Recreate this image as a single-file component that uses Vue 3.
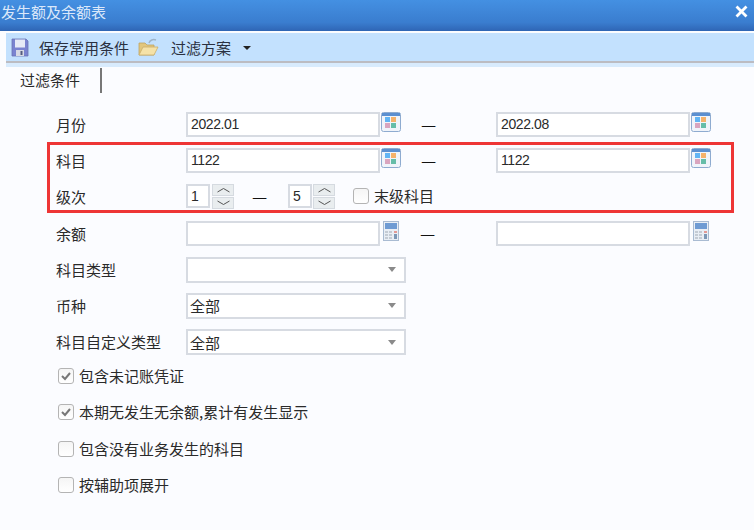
<script setup>
const calendarCells = [
  { x: 4, y: 5, c: '#62b4f4' }, { x: 10, y: 5, c: '#f5b26b' },
  { x: 4, y: 11, c: '#d9a5bf' }, { x: 10, y: 11, c: '#66bda8' }
]
const options = [
  { text: '包含未记账凭证', checked: true },
  { text: '本期无发生无余额,累计有发生显示', checked: true },
  { text: '包含没有业务发生的科目', checked: false },
  { text: '按辅助项展开', checked: false }
]
</script>

<template>
  <div class="win">
    <header class="title">
      <span>发生额及余额表</span>
      <svg class="close" width="13" height="13" viewBox="0 0 13 13">
        <path d="M2.5 2.5l8 8M10.5 2.5l-8 8" stroke="#fff" stroke-width="2.8" stroke-linecap="square" fill="none" />
      </svg>
    </header>

    <div class="toolbar">
      <svg class="floppy" width="18" height="19" viewBox="0 0 18 19">
        <path d="M1 1h14l2 2v15H1z" fill="#7a83d0" stroke="#6a73b4" stroke-width=".8" />
        <rect x="4" y="1.5" width="10" height="8" fill="#e6eaf6" />
        <rect x="5" y="12" width="8" height="6" fill="#d6d9e4" />
        <rect x="9.5" y="13" width="2" height="4" fill="#555c80" />
      </svg>
      <span class="tool-text save">保存常用条件</span>
      <svg class="folder" width="21" height="19" viewBox="0 0 21 19">
        <path d="M1 5h6l2 2h7v10H1z" fill="#e2c67c" stroke="#bfa362" stroke-width=".8" />
        <path d="M5 9h15l-4 8H1z" fill="#f5e2a8" stroke="#c9ad6a" stroke-width=".8" />
        <path d="M11 5c1-3 4-4 7-3" stroke="#9fb4c8" stroke-width="1.5" fill="none" />
      </svg>
      <span class="tool-text scheme">过滤方案</span>
      <i class="caret"></i>
    </div>
    <div class="toolbar-edge"></div>

    <main class="body">
      <div class="tabs">
        <span class="tab">过滤条件</span>
      </div>

      <div class="form">
        <div class="row">
          <label class="lbl">月份</label>
          <div class="input">2022.01</div>
          <svg class="pick" width="20" height="20" viewBox="0 0 20 20">
            <rect x=".5" y=".5" width="19" height="19" rx="2" fill="#f0f4fa" stroke="#8eabd0" />
            <rect x="1" y="1" width="18" height="3" fill="#5b8fd0" />
            <rect v-for="c in calendarCells" :key="c.x + '-' + c.y" :x="c.x" :y="c.y" width="5" height="5" :fill="c.c" />
          </svg>
          <span class="dash">—</span>
          <div class="input">2022.08</div>
          <svg class="pick" width="20" height="20" viewBox="0 0 20 20">
            <rect x=".5" y=".5" width="19" height="19" rx="2" fill="#f0f4fa" stroke="#8eabd0" />
            <rect x="1" y="1" width="18" height="3" fill="#5b8fd0" />
            <rect v-for="c in calendarCells" :key="c.x + '-' + c.y" :x="c.x" :y="c.y" width="5" height="5" :fill="c.c" />
          </svg>
        </div>

        <div class="row">
          <label class="lbl">科目</label>
          <div class="input">1122</div>
          <svg class="pick" width="20" height="20" viewBox="0 0 20 20">
            <rect x=".5" y=".5" width="19" height="19" rx="2" fill="#f0f4fa" stroke="#8eabd0" />
            <rect x="1" y="1" width="18" height="3" fill="#5b8fd0" />
            <rect v-for="c in calendarCells" :key="c.x + '-' + c.y" :x="c.x" :y="c.y" width="5" height="5" :fill="c.c" />
          </svg>
          <span class="dash">—</span>
          <div class="input">1122</div>
          <svg class="pick" width="20" height="20" viewBox="0 0 20 20">
            <rect x=".5" y=".5" width="19" height="19" rx="2" fill="#f0f4fa" stroke="#8eabd0" />
            <rect x="1" y="1" width="18" height="3" fill="#5b8fd0" />
            <rect v-for="c in calendarCells" :key="c.x + '-' + c.y" :x="c.x" :y="c.y" width="5" height="5" :fill="c.c" />
          </svg>
        </div>

        <div class="row">
          <label class="lbl">级次</label>
          <div class="spin-input">1</div>
          <div class="spin-btns first">
            <span class="spin"><svg width="13" height="6" viewBox="0 0 13 6"><path d="M.5 5l6-3.5 6 3.5" stroke="#555" fill="none" /></svg></span>
            <span class="spin"><svg width="13" height="6" viewBox="0 0 13 6"><path d="M.5 1l6 3.5 6-3.5" stroke="#555" fill="none" /></svg></span>
          </div>
          <span class="dash small">—</span>
          <div class="spin-input">5</div>
          <div class="spin-btns">
            <span class="spin"><svg width="13" height="6" viewBox="0 0 13 6"><path d="M.5 5l6-3.5 6 3.5" stroke="#555" fill="none" /></svg></span>
            <span class="spin"><svg width="13" height="6" viewBox="0 0 13 6"><path d="M.5 1l6 3.5 6-3.5" stroke="#555" fill="none" /></svg></span>
          </div>
          <span class="box leaf"></span>
          <span class="leaf-text">末级科目</span>
        </div>

        <div class="row">
          <label class="lbl">余额</label>
          <div class="input"></div>
          <svg class="calc" width="16" height="20" viewBox="0 0 16 20">
            <rect x=".5" y=".5" width="15" height="19" fill="#e9eef5" stroke="#a9bbd2" />
            <rect x="2" y="2" width="12" height="6" fill="#6f9bd3" />
            <g fill="#c4cbd4">
              <rect x="2" y="10" width="3" height="2" /><rect x="6" y="10" width="3" height="2" />
              <rect x="2" y="13" width="3" height="2" /><rect x="6" y="13" width="3" height="2" />
              <rect x="2" y="16" width="3" height="2" /><rect x="6" y="16" width="3" height="2" />
            </g>
            <rect x="11" y="10" width="3" height="2" fill="#e39a95" />
            <rect x="11" y="13" width="3" height="5" fill="#7d97b5" />
          </svg>
          <span class="dash narrow">—</span>
          <div class="input"></div>
          <svg class="calc" width="16" height="20" viewBox="0 0 16 20">
            <rect x=".5" y=".5" width="15" height="19" fill="#e9eef5" stroke="#a9bbd2" />
            <rect x="2" y="2" width="12" height="6" fill="#6f9bd3" />
            <g fill="#c4cbd4">
              <rect x="2" y="10" width="3" height="2" /><rect x="6" y="10" width="3" height="2" />
              <rect x="2" y="13" width="3" height="2" /><rect x="6" y="13" width="3" height="2" />
              <rect x="2" y="16" width="3" height="2" /><rect x="6" y="16" width="3" height="2" />
            </g>
            <rect x="11" y="10" width="3" height="2" fill="#e39a95" />
            <rect x="11" y="13" width="3" height="5" fill="#7d97b5" />
          </svg>
        </div>

        <div class="row">
          <label class="lbl">科目类型</label>
          <div class="combo"><span></span><i class="arrow"></i></div>
        </div>
        <div class="row">
          <label class="lbl">币种</label>
          <div class="combo"><span>全部</span><i class="arrow"></i></div>
        </div>
        <div class="row">
          <label class="lbl">科目自定义类型</label>
          <div class="combo"><span>全部</span><i class="arrow"></i></div>
        </div>
      </div>

      <div class="checks">
        <div v-for="o in options" :key="o.text" class="check">
          <span class="box">
            <svg v-if="o.checked" width="14" height="14" viewBox="0 0 14 14">
              <path d="M3 7l3 3 5-6" stroke="#777" stroke-width="2" fill="none" />
            </svg>
          </span>
          <span class="check-text">{{ o.text }}</span>
        </div>
      </div>

      <div class="highlight"></div>
    </main>
  </div>
</template>

<style scoped>
.win {
  width: 754px;
  height: 530px;
  overflow: hidden;
  position: relative;
  background: #fbfcff;
  font-family: "Noto Sans CJK SC", "Liberation Sans", sans-serif;
  font-size: 15px;
  color: #2a2a2a;
}
.title {
  height: 31px;
  box-sizing: border-box;
  padding: 0 6px 7px 1px;
  display: flex;
  align-items: center;
  justify-content: space-between;
  color: #dbe8fa;
  background: linear-gradient(#4490e2, #3a7dcf 75%, #3068b8);
  border-bottom: 1px solid #2f66b4;
}
.close { display: block; }
.toolbar {
  height: 28px;
  margin: 2px 0 0 6px;
  display: flex;
  align-items: center;
  background: #c3e1fe;
  border-bottom: 2px solid #bcbcc2;
}
.floppy { margin-left: 5px; }
.tool-text { color: #2a3040; line-height: 1; }
.save { margin-left: 10px; }
.folder { margin-left: 9px; }
.scheme { margin-left: 12px; }
.caret {
  margin-left: 12px;
  margin-top: 2px;
  border: 4px solid transparent;
  border-top-color: #222;
  border-bottom-width: 0;
}
.toolbar-edge {
  height: 4px;
  margin-left: 6px;
  background: #d8ebfd;
}
.body { position: relative; }
.tabs {
  height: 25px;
  margin: 1px 0 0 20px;
  width: 82px;
  box-sizing: border-box;
  border-right: 2px solid #777;
  line-height: 24px;
}
.form {
  margin-top: 19px;
  height: 246px;
  padding-left: 56px;
}
.row {
  height: 36.2px;
  display: flex;
  align-items: flex-start;
}
.lbl {
  width: 130px;
  flex: none;
  line-height: 26px;
}
.input {
  width: 194px;
  height: 25px;
  box-sizing: border-box;
  background: #fff;
  border: 2px solid #d7dbe2;
  padding-left: 3px;
  font-family: "Liberation Sans", sans-serif;
  font-size: 14px;
  letter-spacing: -0.4px;
  line-height: 21px;
}
.pick { flex: none; display: block; margin-left: 1px; }
.calc { flex: none; display: block; margin-left: 3px; }
.dash {
  width: 95px;
  flex: none;
  box-sizing: border-box;
  padding-left: 20px;
  font-size: 17px;
  line-height: 24px;
  color: #111;
}
.dash.narrow { width: 97px; padding-left: 21px; }
.dash.small { width: 54px; padding-left: 18px; }
.spin-input {
  width: 24px;
  height: 24px;
  box-sizing: border-box;
  background: #fff;
  border: 2px solid #d7dbe2;
  padding-left: 3px;
  font-family: "Liberation Sans", sans-serif;
  font-size: 14px;
  line-height: 20px;
}
.spin-btns {
  margin-left: 1px;
  width: 22px;
  display: flex;
  flex-direction: column;
  gap: 1px;
}
.spin-btns.first { margin-left: 2px; }
.spin {
  height: 12px;
  background: #e9edef;
  border: 1px solid #d5dae0;
  box-sizing: border-box;
  display: flex;
  align-items: center;
  justify-content: center;
}
.box {
  width: 16px;
  height: 16px;
  flex: none;
  box-sizing: border-box;
  border: 1px solid #b4b4b4;
  border-radius: 3px;
  background: linear-gradient(#f5f5f5, #fff);
  display: flex;
  align-items: center;
  justify-content: center;
}
.leaf { margin: 4px 0 0 18px; }
.leaf-text { margin-left: 5px; line-height: 24px; }
.combo {
  width: 220px;
  height: 26px;
  box-sizing: border-box;
  background: #fff;
  border: 2px solid #d7dbe2;
  padding: 0 8px 0 2px;
  display: flex;
  align-items: center;
  justify-content: space-between;
}
.arrow {
  border: 4.5px solid transparent;
  border-top: 5px solid #8a8a8a;
  border-bottom-width: 0;
}
.checks { padding-left: 58px; }
.check {
  height: 36.3px;
  display: flex;
  align-items: center;
}
.check-text { margin: -1px 0 0 5px; }
.highlight {
  position: absolute;
  left: 47px;
  top: 74px;
  width: 687px;
  height: 71px;
  box-sizing: border-box;
  border: 3px solid #ee3535;
}
</style>
